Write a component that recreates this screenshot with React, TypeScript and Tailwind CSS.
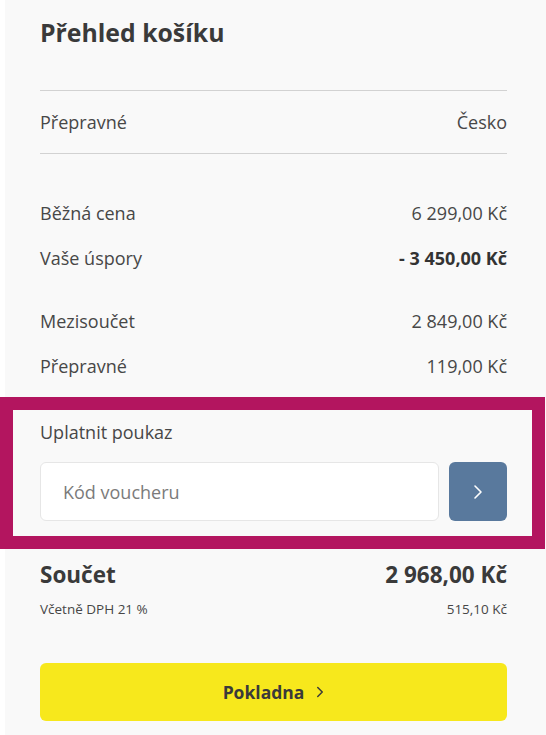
import React from 'react';

type Row = { label: string; value: string; bold?: boolean };

const PRICES: Row[] = [
  { label: 'Běžná cena', value: '6 299,00 Kč' },
  { label: 'Vaše úspory', value: '- 3 450,00 Kč', bold: true },
];

const TOTALS: Row[] = [
  { label: 'Mezisoučet', value: '2 849,00 Kč' },
  { label: 'Přepravné', value: '119,00 Kč' },
];

function Chevron({ className }: { className?: string }) {
  return (
    <svg viewBox="0 0 10 16" className={className} fill="none" stroke="currentColor" strokeLinecap="round" strokeLinejoin="round">
      <path d="M2 2l6 6-6 6" />
    </svg>
  );
}

function SummaryRow({ label, value, bold }: Row) {
  return (
    <div className="flex h-[45px] items-center justify-between">
      <span>{label}</span>
      <span className={bold ? 'font-bold text-[#333]' : ''}>{value}</span>
    </div>
  );
}

export default function App() {
  return (
    <div className="relative min-h-[735px] bg-white font-['Open_Sans',sans-serif] text-[18px] text-[#474747]">
      <div className="ml-[5px] min-h-[735px] bg-[#f9f9f9] pl-[35px] pr-[39px]">
        {/* Header */}
        <h2 className="pt-[16px] text-[24.8px] leading-[32px] font-bold text-[#3a3a3a]">Přehled košíku</h2>

        {/* Shipping country */}
        <div className="mt-[42px] flex h-[64px] items-center justify-between border-y border-[#d2d2d2]">
          <span>Přepravné</span>
          <span>Česko</span>
        </div>

        {/* Price breakdown */}
        <div className="mt-[37px]">
          {PRICES.map((r) => (
            <SummaryRow key={r.label} {...r} />
          ))}
        </div>
        <div className="mt-[18px]">
          {TOTALS.map((r) => (
            <SummaryRow key={r.label} {...r} />
          ))}
        </div>

        {/* Voucher */}
        <div className="mt-[31px] leading-[24px]">Uplatnit poukaz</div>
        <div className="mt-[18px] flex gap-[10px]">
          <input
            placeholder="Kód voucheru"
            className="h-[59px] min-w-0 flex-1 rounded-[6px] border border-[#e6e6e6] bg-white px-[22px] text-[18px] text-[#474747] outline-none placeholder:text-[#7b7b7b]"
          />
          <button className="flex h-[59px] w-[58px] shrink-0 items-center justify-center rounded-[6px] bg-[#59799d] text-white" aria-label="Uplatnit">
            <Chevron className="h-[16px] w-[10px] stroke-[1.6]" />
          </button>
        </div>

        {/* Total */}
        <div className="mt-[38px] flex h-[32px] items-center justify-between text-[22.5px] font-bold text-[#3a3a3a]">
          <span>Součet</span>
          <span>2 968,00 Kč</span>
        </div>
        <div className="mt-[9px] flex h-[18px] items-center justify-between text-[13.5px]">
          <span>Včetně DPH 21 %</span>
          <span>515,10 Kč</span>
        </div>

        <button className="mt-[45px] flex h-[58px] w-full items-center justify-center gap-[12px] rounded-[6px] bg-[#f7e81c] text-[17.5px] font-bold text-[#3a3a3a]">
          Pokladna
          <Chevron className="h-[12px] w-[8px] stroke-[2]" />
        </button>
      </div>

      {/* Highlight frame over the voucher section */}
      <div className="pointer-events-none absolute left-0 top-[397px] h-[152px] w-[545px] border-[13px] border-[#b3155f]" />
    </div>
  );
}
